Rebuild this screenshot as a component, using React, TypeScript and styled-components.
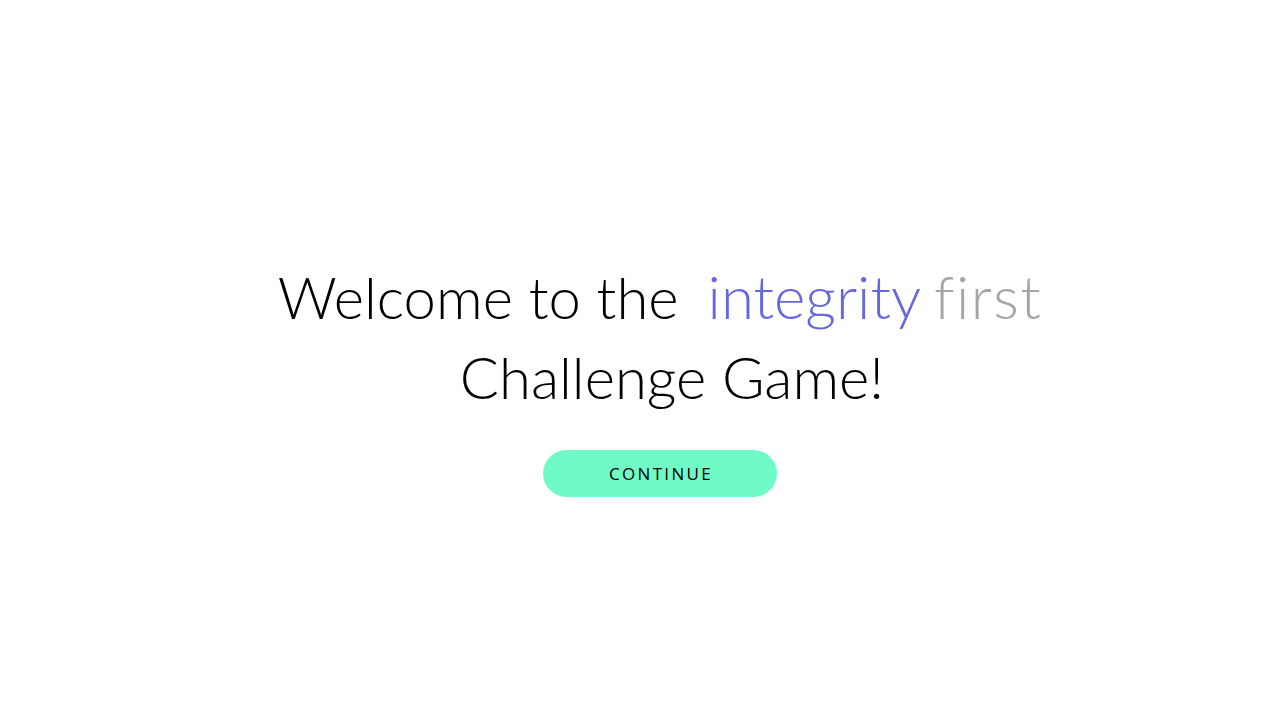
import React from 'react';
import styled, { createGlobalStyle } from 'styled-components';

const GlobalStyle = createGlobalStyle`
  html, body {
    margin: 0;
    padding: 0;
    background: #ffffff;
  }
`;

const Page = styled.div`
  width: 1280px;
  height: 720px;
  display: flex;
  flex-direction: column;
  align-items: center;
  padding-top: 256px;
  padding-left: 40px;
  box-sizing: border-box;
`;

const Heading = styled.h1`
  margin: 0;
  font-family: Lato, "Open Sans", sans-serif;
  font-weight: 300;
  font-size: 58px;
  line-height: 80px;
  color: #000000;
  text-align: center;
  font-variant-ligatures: none;
`;

const Line = styled.div<{ shift?: number }>`
  display: flex;
  align-items: baseline;
  justify-content: center;
  white-space: nowrap;
  padding-left: ${p => p.shift ?? 0}px;
`;

const Logo = styled.span`
  margin-left: 29px;
  font-family: Lato, "Noto Sans", sans-serif;
  font-weight: 300;
  font-size: 60px;
`;

const LogoWord = styled.span<{ tone: 'brand' | 'muted' }>`
  color: ${p => (p.tone === 'brand' ? '#6467e0' : '#a4a4a8')};
  & + & {
    margin-left: 13px;
    letter-spacing: 1.5px;
  }
`;

const Button = styled.button`
  margin-top: 33px;
  width: 234px;
  height: 47px;
  border: none;
  border-radius: 24px;
  background: #6ffbc5;
  color: #000000;
  font-family: "Open Sans", "Liberation Sans", sans-serif;
  font-size: 17px;
  font-weight: 400;
  letter-spacing: 2.3px;
  padding: 0 0 0 2px;
  cursor: pointer;
`;

export default function App() {
  return (
    <>
      <GlobalStyle />
      <Page>
        <Heading>
          <Line>
            Welcome to the
            <Logo>
              <LogoWord tone="brand">integrity</LogoWord>
              <LogoWord tone="muted">first</LogoWord>
            </Logo>
          </Line>
          <Line shift={24}>Challenge Game!</Line>
        </Heading>
        <Button>CONTINUE</Button>
      </Page>
    </>
  );
}
